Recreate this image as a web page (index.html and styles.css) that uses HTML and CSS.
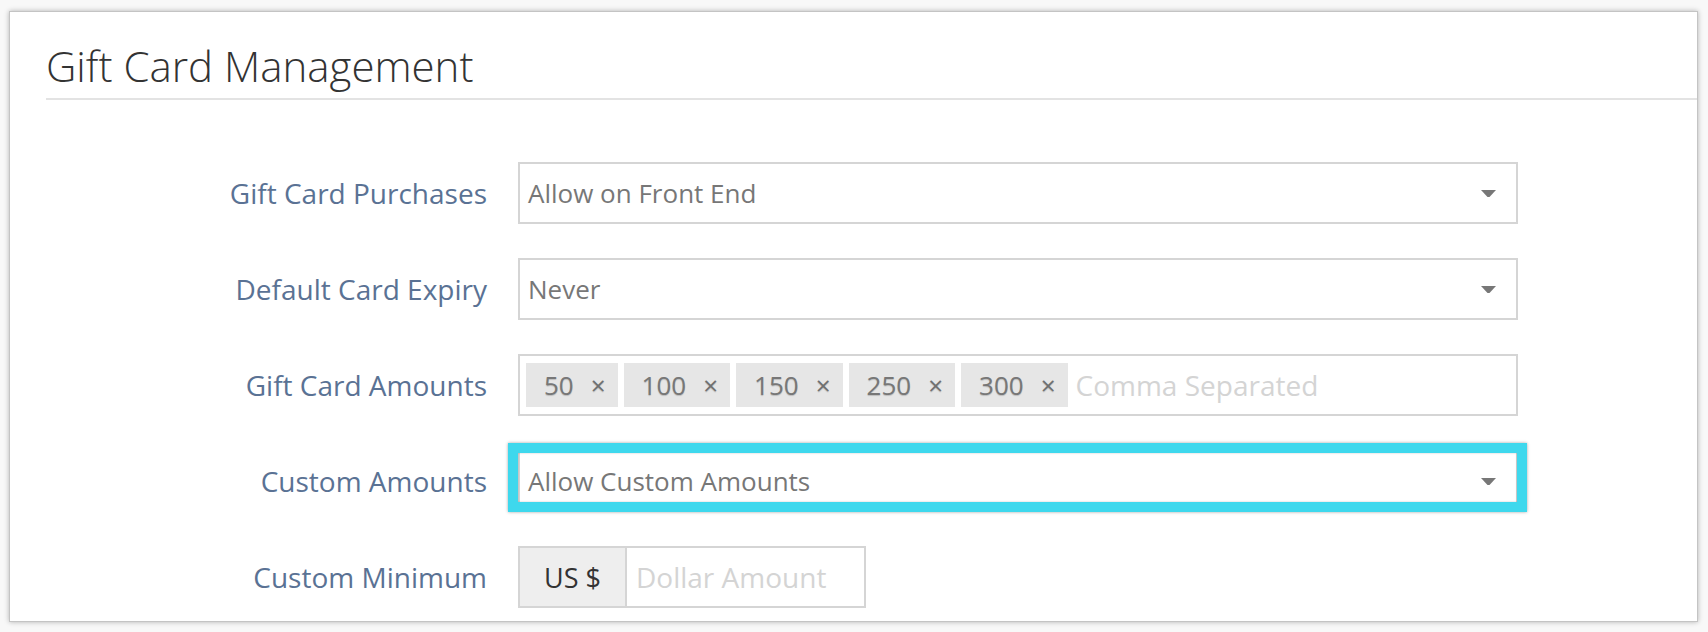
FILE: index.html
```html
<!DOCTYPE html>
<html lang="en">
<head>
<meta charset="utf-8">
<title>Gift Card Management</title>
<link rel="stylesheet" href="styles.css">
</head>
<body>
<div class="panel">
  <div class="header">
    <h1 class="title">Gift Card Management</h1>
    <div class="rule"></div>
  </div>
  <div class="form">
    <div class="label">Gift Card Purchases</div>
    <div class="select">
      <span>Allow on Front End</span>
      <svg class="caret" width="15" height="7" viewBox="0 0 15 7"><path d="M0 0H15L8.5 7H6.5Z"/></svg>
    </div>

    <div class="label">Default Card Expiry</div>
    <div class="select">
      <span>Never</span>
      <svg class="caret" width="15" height="7" viewBox="0 0 15 7"><path d="M0 0H15L8.5 7H6.5Z"/></svg>
    </div>

    <div class="label">Gift Card Amounts</div>
    <div class="tags">
      <span class="tag">50<span class="x">×</span></span>
      <span class="tag">100<span class="x">×</span></span>
      <span class="tag">150<span class="x">×</span></span>
      <span class="tag">250<span class="x">×</span></span>
      <span class="tag">300<span class="x">×</span></span>
      <span class="placeholder tags-ph">Comma Separated</span>
    </div>

    <div class="label">Custom Amounts</div>
    <div class="select highlighted">
      <span>Allow Custom Amounts</span>
      <svg class="caret" width="15" height="7" viewBox="0 0 15 7"><path d="M0 0H15L8.5 7H6.5Z"/></svg>
      <div class="hl"></div>
    </div>

    <div class="label">Custom Minimum</div>
    <div class="group">
      <div class="addon">US $</div>
      <div class="input"><span class="placeholder">Dollar Amount</span></div>
    </div>
  </div>
</div>
</body>
</html>
```

FILE: styles.css
```css
html, body {
  margin: 0;
}

body {
  background: #f8f8f8;
  padding: 11px 10px 10px 9px;
  font-family: "Open Sans", "Liberation Sans", sans-serif;
}

.panel {
  background: #fff;
  border: 1px solid #c4c4c4;
  box-shadow: 0 0 5px rgba(0, 0, 0, 0.28);
  height: 611px;
  box-sizing: border-box;
  overflow: hidden;
}

.header {
  padding: 33px 0 0 36px;
}

.title {
  margin: 0;
  font-size: 42px;
  font-weight: 300;
  line-height: 42px;
  color: #333;
}

.rule {
  height: 2px;
  background: #e3e3e3;
  margin-top: 11px;
}

.form {
  display: grid;
  grid-template-columns: 441px 1000px;
  column-gap: 31px;
  row-gap: 34px;
  padding-left: 36px;
  margin-top: 62px;
  align-items: center;
}

.label {
  text-align: right;
  font-size: 28px;
  color: #5a7294;
}

.select {
  position: relative;
  height: 62px;
  box-sizing: border-box;
  border: 2px solid #d5d5d5;
  display: flex;
  align-items: center;
  justify-content: space-between;
  padding: 0 20px 0 8px;
  font-size: 26px;
  color: #777;
}

.caret {
  display: block;
  fill: #777;
}

.hl {
  position: absolute;
  top: -9px;
  bottom: -2px;
  left: -12px;
  right: -11px;
  border: 10px solid #3ed8ed;
  box-shadow: 0 0 3px rgba(0, 0, 0, 0.35), inset 0 0 2px rgba(0, 0, 0, 0.25);
  pointer-events: none;
}

.tags {
  height: 62px;
  box-sizing: border-box;
  border: 2px solid #d5d5d5;
  display: flex;
  align-items: center;
  gap: 6px;
  padding: 0 6px;
  font-size: 26px;
}

.tag {
  display: flex;
  align-items: center;
  height: 44px;
  background: #e6e6e6;
  padding: 0 12px 0 18px;
  color: #777;
  text-shadow: 0 1px 1px rgba(0, 0, 0, 0.18);
}

.tag .x {
  margin-left: 17px;
  color: #707070;
}

.placeholder {
  color: #d4d4d4;
  font-size: 28px;
}

.tags-ph {
  margin-left: 2px;
}

.group {
  display: flex;
  width: 348px;
  height: 62px;
  font-size: 27px;
}

.addon {
  width: 109px;
  box-sizing: border-box;
  border: 2px solid #d5d5d5;
  background: #eee;
  color: #333;
  display: flex;
  align-items: center;
  justify-content: center;
}

.input {
  flex: 1;
  border: 2px solid #d5d5d5;
  border-left: 0;
  display: flex;
  align-items: center;
  padding-left: 9px;
}
```
